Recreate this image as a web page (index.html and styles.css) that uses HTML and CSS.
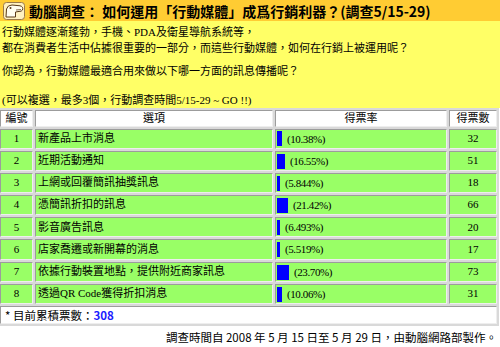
FILE: index.html
```html
<!DOCTYPE html>
<html lang="zh-Hant">
<head>
<meta charset="utf-8">
<title>動腦調查</title>
<link rel="stylesheet" href="styles.css">
</head>
<body>
<div class="page">
  <header class="titlebar">
    <svg class="logo" viewBox="0 0 22 18" aria-hidden="true">
      <rect x="0.5" y="0.5" width="21" height="17" rx="3" fill="#fff1c0" stroke="#9a7a4a"/>
      <path d="M3 15 L3.5 7 Q4.5 3 9 3 L17 3.8 Q20.5 4.6 19.5 8 Q19 9.5 15 9.6 L12.5 10 L12.5 15 Z" fill="#fffdf0" stroke="#5a3a18" stroke-width="1"/>
      <circle cx="7.5" cy="6" r="1" fill="#5a3a18"/>
      <path d="M13 8 L18 7.6" stroke="#5a3a18" stroke-width="0.8"/>
    </svg>
    <h1>動腦調查： 如何運用「行動媒體」成爲行銷利器？(調查5/15-29)</h1>
  </header>

  <section class="intro">
    <p class="lead">行動媒體逐漸蓬勃，手機、PDA及衛星導航系統等，<br>都在消費者生活中佔據很重要的一部分，而這些行動媒體，如何在行銷上被運用呢？</p>
    <p class="question">你認為，行動媒體最適合用來做以下哪一方面的訊息傳播呢？</p>
    <p class="note">(可以複選，最多3個，行動調查時間5/15-29 ~ GO !!)</p>
  </section>

  <table class="poll">
    <colgroup>
      <col class="c-no"><col class="c-opt"><col class="c-rate"><col class="c-count">
    </colgroup>
    <thead>
      <tr><th>編號</th><th>選項</th><th>得票率</th><th>得票數</th></tr>
    </thead>
    <tbody>
      <tr><td class="no">1</td><td>新產品上市消息</td><td class="rate"><span class="bar" style="width:5px"></span><span class="pct">(10.38%)</span></td><td class="count">32</td></tr>
      <tr><td class="no">2</td><td>近期活動通知</td><td class="rate"><span class="bar" style="width:8px"></span><span class="pct">(16.55%)</span></td><td class="count">51</td></tr>
      <tr><td class="no">3</td><td>上網或回覆簡訊抽獎訊息</td><td class="rate"><span class="bar" style="width:3px"></span><span class="pct">(5.844%)</span></td><td class="count">18</td></tr>
      <tr><td class="no">4</td><td>憑簡訊折扣的訊息</td><td class="rate"><span class="bar" style="width:11px"></span><span class="pct">(21.42%)</span></td><td class="count">66</td></tr>
      <tr><td class="no">5</td><td>影音廣告訊息</td><td class="rate"><span class="bar" style="width:3px"></span><span class="pct">(6.493%)</span></td><td class="count">20</td></tr>
      <tr><td class="no">6</td><td>店家喬遷或新開幕的消息</td><td class="rate"><span class="bar" style="width:3px"></span><span class="pct">(5.519%)</span></td><td class="count">17</td></tr>
      <tr><td class="no">7</td><td>依據行動裝置地點，提供附近商家訊息</td><td class="rate"><span class="bar" style="width:12px"></span><span class="pct">(23.70%)</span></td><td class="count">73</td></tr>
      <tr><td class="no">8</td><td>透過QR Code獲得折扣消息</td><td class="rate"><span class="bar" style="width:5px"></span><span class="pct">(10.06%)</span></td><td class="count">31</td></tr>
    </tbody>
    <tfoot>
      <tr><td colspan="4" class="total">* 目前累積票數：<strong>308</strong></td></tr>
    </tfoot>
  </table>

  <p class="credit">調查時間自 2008 年 5 月 15 日至 5 月 29 日，由動腦網路部製作。</p>
</div>
</body>
</html>
```

FILE: styles.css
```css
html, body {
  margin: 0;
  padding: 0;
  background: #ffffff;
  overflow: hidden;
}

body {
  font-family: "Liberation Serif", "Noto Sans CJK TC", serif;
  font-size: 11px;
  color: #000000;
}

.page {
  width: 500px;
}

.titlebar {
  display: flex;
  align-items: center;
  gap: 4px;
  height: 21px;
  padding-left: 3px;
  background: #ffcc33;
}

.logo {
  width: 22px;
  height: 18px;
  flex: none;
}

.titlebar h1 {
  margin: 0;
  font-family: "Noto Sans CJK TC", sans-serif;
  font-size: 14px;
  font-weight: bold;
  line-height: 20px;
  white-space: nowrap;
}

.intro {
  background: #ffff66;
  padding: 2.5px 0 0 2px;
}

.intro p {
  margin: 0;
}

.intro .lead {
  line-height: 16px;
}

.intro .question {
  margin-top: 7.5px;
  line-height: 17px;
}

.intro .note {
  margin-top: 11.5px;
  line-height: 16px;
}

.poll {
  margin-left: -2px;
  width: 501px;
  table-layout: fixed;
  border-collapse: separate;
  border-spacing: 2px;
  background: #d9d9d9;
}

.c-no { width: 33px; }
.c-opt { width: 238px; }
.c-rate { width: 172px; }
.c-count { width: 48px; }

.poll th,
.poll td {
  padding: 0;
  border: 1px solid;
  border-color: #9c9c9c #eeeeee #eeeeee #9c9c9c;
}

.poll th {
  background: #ffffff;
  font-weight: normal;
  line-height: 15px;
  text-align: center;
}

.poll tbody td {
  background: #99ff66;
  line-height: 17.4px;
  padding-left: 2px;
  white-space: nowrap;
}

.poll td.no,
.poll td.count {
  text-align: center;
  padding-left: 0;
}

.poll td.rate {
  padding-left: 1px;
}

.bar {
  display: inline-block;
  height: 15px;
  background: #0000ff;
  vertical-align: middle;
  margin-right: 5px;
}

.pct {
  vertical-align: middle;
  letter-spacing: -0.4px;
}

.poll td.total {
  background: #ffffff;
  font-family: "Noto Sans CJK TC", sans-serif;
  font-size: 11.5px;
  line-height: 16px;
  padding-left: 4px;
}

.total strong {
  color: #1a1aff;
  font-weight: bold;
}

.credit {
  margin: 3px 0 0;
  padding-right: 3px;
  text-align: right;
  font-family: "Noto Sans CJK TC", sans-serif;
  font-size: 11.5px;
  line-height: 16px;
}
```
